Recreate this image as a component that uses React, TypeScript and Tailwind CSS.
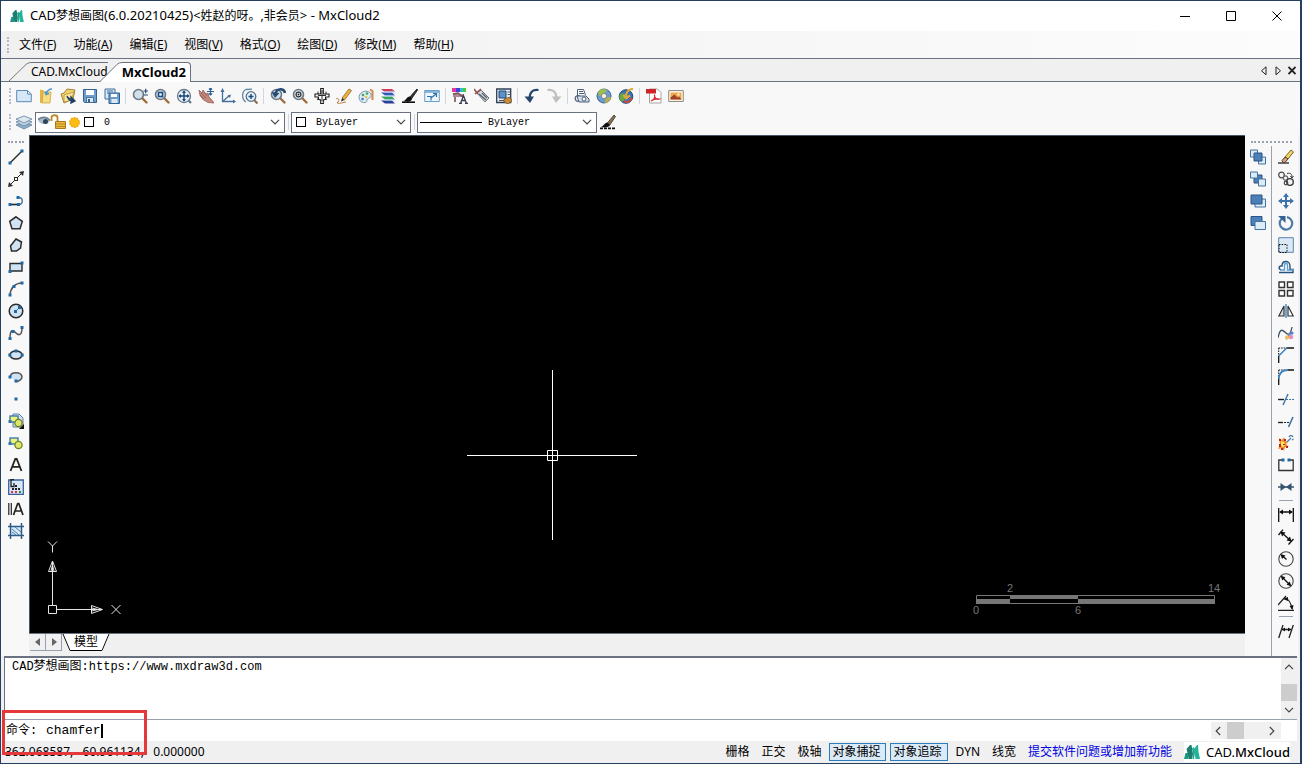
import { useState, type ReactNode } from "react";

const line = "#2b2b2b";
const blue = "#2f74ad";
const pale = "#cfe3f5";

const Lens = ({ children }: { children?: ReactNode }) => (
    <>
        <path d="M10 10l4.5 4.5" stroke="#a06c3a" strokeWidth="2.4" strokeLinecap="round" />
        <circle cx="6.5" cy="6.5" r="5" fill="#d3e0ea" stroke="#6b7885" strokeWidth="1.6" />
        {children}
    </>
);

const Shapes = () => (
    <>
        <rect x="2" y="3" width="8" height="6" fill="#eef27a" stroke={blue} strokeWidth="1.3" />
        <circle cx="10.5" cy="10" r="3.6" fill="#dfe66a" stroke="#6f8428" strokeWidth="1.3" />
        <rect x="0.5" y="7" width="3" height="3" fill={blue} />
    </>
);

const dot = (x: number, y: number) => (
    <rect key={`${x}-${y}`} x={x - 1.5} y={y - 1.5} width="3" height="3" fill="#1f6aa5" />
);

const icons: Record<string, ReactNode> = {
    // standard
    New: <path d="M.7 2.5h10.8l3.8 3.6v7.6H.7z M11.5 2.5v3.6h3.8" fill="#d5e8f8" stroke="#5d8bb5" />,
    Open: (
        <>
            <path d="M2 1.5l4 1v12l-4 .5z" fill="#e3b541" />
            <path d="M5 4h8l-1 11H4z" fill="#f6dc83" stroke="#cfa23a" strokeWidth=".8" />
            <path d="M14 1c-3 0-5 2-6 5M7 3.5l1 3 3-1" stroke="#4d94cc" strokeWidth="1.5" />
        </>
    ),
    OpenCloud: (
        <>
            <path d="M1 6l3-1 3-4 8 1-2 9-9 4z" fill="#efd173" stroke="#a58432" />
            <path d="M4 7l10-3-3 8-7 2z" fill="#fae89a" stroke="#b6913a" strokeWidth=".8" />
            <path d="M7 8c1 3 3 5 6 4.500M11 9l4 4-4 2z" stroke="#1d3f63" strokeWidth="1.4" fill="#1d3f63" />
        </>
    ),
    Save: (
        <>
            <path d="M1.5 1.5h13v13h-12l-1-1z" fill="#6d9fce" stroke="#33618f" />
            <path d="M4 2h8v5H4z" fill="#fff" />
            <path d="M4.5 9.5h7v5h-7z" fill="#dce9f5" stroke="#33618f" strokeWidth=".8" />
            <path d="M6 11h2v3H6z" fill="#33618f" />
        </>
    ),
    SaveAll: (
        <>
            <path d="M1 1h10v10H1z" fill="#d9e8f6" stroke="#41719f" />
            <path d="M3 3h6M3 5h3" stroke="#41719f" />
            <path d="M5 5h10.5v10.5H5z" fill="#6d9fce" stroke="#33618f" />
            <path d="M7 6h6v3H7z" fill="#fff" />
            <path d="M7.5 11h6v4h-6z" fill="#dce9f5" />
        </>
    ),
    Zoom: (
        <Lens>
            <path d="M11.5 3H16M13.7.8v4.500M11.500 7H16" stroke="#264a74" strokeWidth="1.2" />
        </Lens>
    ),
    ZoomWindow: (
        <Lens>
            <rect x="4.5" y="4.5" width="4" height="4" fill="#eef6fc" stroke="#1f4f86" strokeWidth="1.6" />
        </Lens>
    ),
    ZoomExtents: (
        <>
            <path d="M11 11l4 4" stroke="#5a6e80" strokeWidth="2" />
            <circle cx="8" cy="8" r="6.500" fill="#e4eef6" stroke="#66788a" strokeWidth="1.300" />
            <path d="M8 3v10M3 8h10" stroke="#1d4474" strokeWidth="1.400" />
            <path d="M6 5l2-2.500L10 5zM6 11l2 2.500 2-2.500zM5 6L2.500 8 5 10zM11 6l2.500 2-2.500 2z" fill="#1d4474" />
        </>
    ),
    Pan: (
        <>
            <path d="M1 2l3 3 1-3 3 4 2-1 1 4 2 2 3 4-6-.5-5-3-3-4z" fill="#c4887e" stroke="#96615b" strokeWidth=".8" />
            <path d="M3 5l5 5M6 4l3 4M2 7l4 4" stroke="#8c5550" strokeWidth=".8" />
            <path d="M12.5 0v7M9 3.5h7M11 1.5L12.5 0 14 1.5M11 5.500L12.5 7 14 5.500" stroke="#2a5f98" strokeWidth="1.2" />
        </>
    ),
    Ucs: (
        <>
            <path d="M2.5 2v11.5H14M2.5 13.5l7-6" stroke="#45709c" strokeWidth="1.3" />
            <path d="M.5 4l2-4 2 4zM13 11.500l3 2-3 2zM7.500 7.500l3.500-1-1 3.500z" fill="#45709c" />
        </>
    ),
    ZoomRotate: (
        <>
            <path d="M12 12l3.5 3.5" stroke="#8a6d4b" strokeWidth="2" />
            <circle cx="9" cy="8.5" r="4.800" fill="#e6f1fa" stroke="#5b6f83" strokeWidth="1.3" />
            <path d="M9 6v5M6.500 8.500h5" stroke="#1d4f86" strokeWidth="1.5" />
            <path d="M4 14C-.5 11-.5 3.500 4 1.500l6-.3" stroke="#5f86ab" strokeWidth="1.3" />
        </>
    ),
    ZoomPrevious: (
        <Lens>
            <path d="M15 5C14 0 7 0 5.500 5.500" stroke="#274c78" strokeWidth="2.600" />
            <path d="M1.500 4l3.500 6 4.500-5z" fill="#274c78" />
        </Lens>
    ),
    ZoomRealtime: (
        <Lens>
            <circle cx="6.5" cy="6.5" r="2.4" fill="#fff" stroke="#333" strokeWidth="1.2" />
            <circle cx="6.5" cy="6.5" r="1" fill="#222" />
        </Lens>
    ),
    Regen: (
        <>
            <path d="M6.700 .5h2.600v5.500H15v3H11.500v2H13l-3.700 1v3.500H6.700V12L3 11h1.500V9H1V6h5.700z" fill="#fff" stroke="#1b1b1b" strokeWidth="1.100" />
            <path d="M4 3.500v3M12 3.500v3M8 2v11M4 7.500h8" stroke="#1b1b1b" strokeWidth=".9" />
        </>
    ),
    Pencil: (
        <>
            <path d="M6 10l7-9 2.500 1.500L8.500 12z" fill="#f1b23c" stroke="#8c6324" strokeWidth=".8" />
            <path d="M6 10l2.500 2L5 13.500z" fill="#333" />
            <path d="M0 11c3-2 4 2 1 4 4 1 6-1 9-1" stroke="#bd7b43" />
        </>
    ),
    Palette: (
        <>
            <path d="M13 6C11 2 4 2 1.500 7 0 12 3 15 7 14.500c3-.5 1-3 3-4s4-1 3-4.500z" fill="#dcebf6" stroke="#7896b0" />
            <circle cx="5" cy="7" r="1.300" fill="#49a555" />
            <circle cx="9" cy="5.500" r="1.300" fill="#49a555" />
            <circle cx="4.500" cy="11" r="1.300" fill="#3c7fd0" />
            <circle cx="8" cy="9" r="1.300" fill="#eec041" />
            <path d="M12 1.500l2.500 1.500v9" stroke="#d28a4d" strokeWidth="2" />
        </>
    ),
    Layers: (
        <>
            <path d="M1 1h11l3 2.500H4z" fill="#d63a5d" />
            <path d="M1 4.500h11l3 3H5z" fill="#3456b8" />
            <path d="M1 8.500h11l3 3H5z" fill="#3aa75e" />
            <path d="M1 12.500h11l3 3H5z" fill="#2a3f9b" />
            <path d="M4 4h11M5 8h10M5 12h10" stroke="#a9cbe9" />
        </>
    ),
    Brush: (
        <>
            <path d="M7 10l8-9 .5 1L9 11.500z" fill="#333" stroke="#222" />
            <path d="M8 8.500c-4 0-3 4-7 4.500 4 1.500 8 1 9-2z" fill="#111" />
            <path d="M0 14.200h13" stroke="#111" strokeWidth="1.600" />
        </>
    ),
    FitWindow: (
        <>
            <path d="M.7 2.500h14.600v11H.7z" fill="#eef6fc" stroke="#6aa0cc" />
            <path d="M1 4h14" stroke="#6aa0cc" strokeWidth="1.500" />
            <path d="M7 10l5-4M9 5.500h3.500V9M3 8.500h4v4" stroke="#2f74ad" strokeWidth="1.200" />
        </>
    ),
    ColorText: (
        <>
            <path d="M0 0h4v4H0z" fill="#e9359f" />
            <path d="M4 0h4v4H4z" fill="#3a45da" />
            <path d="M8 0h3v4H8z" fill="#2dc2d1" />
            <path d="M11 0h3v4h-3z" fill="#54c63a" />
            <path d="M1 6h11v3H1z" fill="#a98a90" />
            <path d="M3 9v5M1 6l5-1 5 4" stroke="#7c4e56" strokeWidth="1.600" />
            <path d="M8.500 15.500l3-8 3 8M9.500 12.500h4M7 15.500h3M13 15.500h3" stroke="#3a3a55" strokeWidth="1.300" />
        </>
    ),
    Erase: (
        <>
            <path d="M3 5l4-3 8 8-4 4z" fill="#d7dbdf" stroke="#6d747b" />
            <path d="M5 6l7 6M8 5l5 5" stroke="#565d64" strokeWidth="1.300" />
            <path d="M0 1l4 5M1 6l6-5" stroke="#8f4a4e" strokeWidth="1.500" />
        </>
    ),
    Properties: (
        <>
            <path d="M.7 1h14v13.500H.7z" fill="#eaf1f8" stroke="#2b3f58" strokeWidth="1.300" />
            <path d="M3 3h7v7H3z" fill="#5d92c7" stroke="#244870" />
            <path d="M11.500 4H14M11.500 6.500H14M3 12.500h5" stroke="#555" />
            <path d="M8 11l6-2 2 4-4 3-4-2z" fill="#c98c3f" stroke="#6b481e" strokeWidth=".7" />
        </>
    ),
    Undo: (
        <>
            <path d="M14.500 2C9 1 5.500 4 5.500 11" stroke="#27446b" strokeWidth="2.200" />
            <path d="M.5 8.500h9.500L6 15z" fill="#27446b" />
        </>
    ),
    Redo: (
        <>
            <path d="M1.500 2C7 1 10.500 4 10.500 11" stroke="#bdbfc1" strokeWidth="2.200" />
            <path d="M6 8.500h9.500L10 15z" fill="#bdbfc1" />
        </>
    ),
    Print: (
        <>
            <path d="M3.500 7V1.500h6L11.500 7" fill="#fff" stroke="#4c5e7a" />
            <path d="M5 3.500h4M5 5.500h5" stroke="#4c5e7a" />
            <circle cx="4" cy="10.500" r="2.800" fill="#e8eef6" stroke="#4c5e7a" strokeWidth="1.200" />
            <path d="M3 8h9l3 3v3H5z" fill="#d6deea" stroke="#4c5e7a" />
            <circle cx="10" cy="11" r="2" fill="#fff" stroke="#4c5e7a" />
        </>
    ),
    Publish: (
        <>
            <circle cx="8" cy="8" r="7" fill="#6a9bd1" stroke="#44628a" />
            <path d="M2 4c3-4 7-3 9-2L8 6 3 8z" fill="#9dbf4f" />
            <path d="M9 14c0-4 3-5 6-5-1 4-3 6-6 6z" fill="#b8b14a" />
            <circle cx="8" cy="8" r="2.600" fill="#f4f4ea" stroke="#876" strokeWidth=".8" />
        </>
    ),
    Globe: (
        <>
            <circle cx="8" cy="8.500" r="6.800" fill="#3c70b3" stroke="#26456f" />
            <path d="M2 6c3-2 5 0 5 3s-2 4-3 5c-3-2-3-5-2-8z" fill="#69a844" />
            <path d="M15 1C10 1 8 5 8 9M5.500 7L8 10.500 12 7.500" stroke="#dba93c" strokeWidth="2.200" />
            <path d="M6 13c3 2 6 1 8-3" stroke="#d8483b" strokeWidth="1.800" />
        </>
    ),
    Pdf: (
        <>
            <path d="M3.500 1h8l3.500 3.500V15H3.500z" fill="#fff" stroke="#a5a5a5" />
            <path d="M0 1h10v4.500H0z" fill="#cf2229" />
            <path d="M5 13c3-1 4-4 3.500-6.500C8 10 11 12 13.500 11 10 10.500 7 11.500 5 13z" stroke="#d8262c" strokeWidth="1.200" />
        </>
    ),
    Image: (
        <>
            <path d="M.7 2.500h14.600v11H.7z" fill="#fdf3df" stroke="#8d8d8d" />
            <path d="M2.500 4.500h11v7h-11z" fill="#efa94f" />
            <path d="M2.500 11.500v-2l4-3 3 3 1.500-1 2.500 3z" fill="#a2412c" />
            <circle cx="10.500" cy="6.500" r="1.200" fill="#fff2a8" />
        </>
    ),
    // draw
    Line: <><path d="M2.5 13.5l11-11" stroke={line} strokeWidth="1.4" />{dot(2, 14)}{dot(14, 2)}</>,
    Ray: (
        <>
            <path d="M2 14L14 2" stroke={line} />
            <path d="M0 16l1-5 4 4zM16 0l-5 1 4 4z" fill={line} />
            <rect x="6.5" y="6.5" width="3" height="3" fill="#fff" stroke={line} />
        </>
    ),
    Polyline: <><path d="M2 11.500h8.500c5 0 5-7 0-7" stroke="#4d7ba6" strokeWidth="1.5" /><path d="M2 11.500h8" stroke={line} strokeWidth="1.4" />{dot(2, 11.5)}{dot(10.5, 11.5)}{dot(10, 4.5)}</>,
    Polygon: <path d="M8 1.800l6.300 4.600-2.300 7.300H4L1.700 6.400z" fill={pale} stroke={line} strokeWidth="1.5" />,
    PolygonFree: <path d="M8 2l5.500 3-1 6-4 3H3.500l-1-5z" fill={pale} stroke={line} strokeWidth="1.5" />,
    Rectangle: <><path d="M2 4.500h12v7.500H2z" fill={pale} stroke={line} strokeWidth="1.4" />{dot(2, 12.5)}{dot(14, 4)}</>,
    Arc: <><path d="M2 14C2.500 7 7 2 14 2" stroke="#555" strokeWidth="1.5" />{dot(2, 14)}{dot(6, 5.5)}{dot(14, 2)}</>,
    Circle: <><circle cx="8" cy="8" r="6.800" fill={pale} stroke={line} strokeWidth="1.5" /><path d="M8 8l3.500-3.500" stroke={blue} />{dot(7.5, 8.5)}{dot(11.5, 4.5)}</>,
    Spline: <><path d="M2 13c0-9 3-8 6-5s6 2 6-5" stroke="#555" strokeWidth="1.5" />{dot(2, 13.5)}{dot(5, 6.5)}{dot(14, 2.5)}</>,
    Ellipse: <><ellipse cx="8" cy="8" rx="6" ry="4" fill={pale} stroke={line} strokeWidth="1.5" />{dot(1.8, 8)}{dot(14.2, 8)}{dot(8, 4)}</>,
    EllipseArc: <><path d="M2.500 7C3 2.500 13 2.500 14 7.500c0 3-3 5-6.500 5" fill={pale} stroke="#555" strokeWidth="1.5" />{dot(2, 8)}{dot(8, 12)}</>,
    Point: dot(8, 8),
    MakeBlock: <><path d="M5 1h6l4 4v9H5z" fill="#cfdff0" stroke="#6180a3" /><Shapes /><path d="M16 11v5h-5z" fill="#111" /></>,
    InsertBlock: <Shapes />,
    Text: <path d="M2.500 14L7.300 2h1.400l4.800 12M4.500 9.800h7" stroke="#222" strokeWidth="1.8" />,
    Hatch: (
        <>
            <path d="M.7 1h14.600v14.300H.7z" fill="#d7e7f7" stroke="#3a5f9c" strokeWidth="1.300" />
            <path d="M6 .5H3v7h3V4" stroke="#222" strokeWidth="1.300" />
            <path d="M7 6h2v2H7zM10 9h2v2h-2zM7 9h2v2H7zM4 9h2v2H4z" fill="#222" />
            <path d="M3 12h2v2H3zM7 12h2v2H7z" fill="#d6324a" />
            <path d="M11 12h2v2h-2z" fill="#2b8447" />
        </>
    ),
    Mtext: <><path d="M.8 2v12M3.300 2v12" stroke="#222" strokeWidth="1.2" /><path d="M5.500 14L9.700 2.500h1.100L15 14M7.200 10h6" stroke="#222" strokeWidth="1.7" /></>,
    Region: (
        <>
            <path d="M2.500 3.500h11v9h-11z" fill="#d7e9f6" />
            <path d="M0 3.500h16M0 12.500h16M2.500 0v16M13.500 0v16" stroke="#2c5c86" strokeWidth="1.5" />
            <path d="M4 6l7 6M7 4l6 5M4 9l4 3" stroke="#4a7ea8" />
        </>
    ),
    // draw order
    ToFront: <><path d="M.5 1h7v7h-7zM8.500 8h7v7h-7z" fill="#dcebf8" stroke="#44739f" /><path d="M4 4h8v8H4z" fill="#4b80b8" stroke="#2c5585" /></>,
    ToBack: <><path d="M4 4h8v8H4z" fill="#4b80b8" stroke="#2c5585" /><path d="M.5 1h7v6h-7zM8.500 8h7v7h-7z" fill="#dcebf8" stroke="#44739f" /></>,
    AboveObject: <><path d="M5 6h10.500v8H5z" fill="#dcebf8" stroke="#44739f" /><path d="M1 2h11v9H1z" fill="#4b80b8" stroke="#2c5585" /></>,
    UnderObject: <><path d="M1 1.500h11v9H1z" fill="#4b80b8" stroke="#2c5585" /><path d="M5 6.500h10.500v8H5z" fill="#dcebf8" stroke="#44739f" /></>,
    // modify
    Delete: (
        <>
            <path d="M0 14h11" stroke="#222" strokeWidth="1.3" />
            <path d="M7 8l6-7 2.500 2L10 10z" fill="#f1d75b" stroke="#765f2d" />
            <path d="M4 11.500L7 8l3 2-3 3.500H5z" fill="#d9a07b" stroke="#4d3f33" />
        </>
    ),
    Copy: (
        <>
            <circle cx="3.5" cy="4" r="2.800" fill="#f6f6f6" stroke="#444" strokeWidth="1.2" />
            <circle cx="7.5" cy="7" r="2.200" stroke="#666" strokeWidth="1.2" />
            <circle cx="12" cy="11" r="3.300" fill="#eef4fa" stroke="#333" strokeWidth="1.3" />
            <circle cx="8" cy="12" r="1.800" stroke="#444" strokeWidth="1.2" />
            <path d="M9 2.500c4-1 5 1 5 4M12.500 5L14 7l1.500-2" stroke="#333" />
        </>
    ),
    Move: <><path d="M8 2v12M2 8h12" stroke="#3d73a9" strokeWidth="2" /><path d="M5 4l3-4 3 4zM5 12l3 4 3-4zM4 5L0 8l4 3zM12 5l4 3-4 3z" fill="#3d73a9" /></>,
    Rotate: <><path d="M9 2.200A6.200 6.200 0 1 1 3.500 4" stroke="#4b7aa8" strokeWidth="2.2" /><path d="M0 1h7.500v7z" fill="#35638f" /></>,
    Scale: <><path d="M.7.7h14.600v14.600H.7z" fill="#dbe9f6" stroke="#5b82ab" /><path d="M1 7.500h8v8M1 8v7.500h8" stroke="#111" strokeDasharray="1.5 1.2" /></>,
    Offset: (
        <>
            <path d="M1 13.500h14v-3h-3V7c0-6-8-6-8 0H3c-2.500 0-2.500 3.500 0 3.500" stroke="#24537f" strokeWidth="1.4" />
            <path d="M2 11h4.500V6.500c0-3 3-3 3 0V11H15" stroke="#5c9bd0" strokeWidth="1.3" />
        </>
    ),
    Array: <path d="M1 1h5.500v5.500H1zM9.500 1H15v5.500H9.500zM1 9.500h5.500V15H1zM9.500 9.500H15V15H9.500z" fill="#fff" stroke="#333" strokeWidth="1.4" />,
    Mirror: <><path d="M6 3v10H.8z" fill="#ddd" stroke="#333" strokeWidth="1.2" /><path d="M10 3v10h5.200z" fill="#fff" stroke="#333" strokeWidth="1.2" /><path d="M8 1v14" stroke="#3d86c4" strokeWidth="1.4" /></>,
    EditSpline: (
        <>
            <path d="M0 13c2-11 5-8 8-5s5 0 6-6" stroke="#3f5266" strokeWidth="1.3" />
            <path d="M8 14l6-7" stroke="#6b90c8" strokeWidth="2" />
            <circle cx="13" cy="12" r="2.300" fill="#e78fb5" />
            <circle cx="9" cy="12.500" r="2" fill="#f3bf54" />
            <circle cx="14" cy="8" r="1.600" fill="#5580d0" />
        </>
    ),
    Chamfer: <><path d="M.7 1h8M.7 1v8" stroke="#111" strokeDasharray="1.5 1" /><path d="M8.500 1H16M.7 9v7" stroke="#111" strokeWidth="1.3" /><path d="M.7 9l8-8" stroke="#3d86c4" strokeWidth="1.6" /></>,
    Fillet: <><path d="M.7 1h8M.7 1v8" stroke="#111" strokeDasharray="1.5 1" /><path d="M.7 9v7M9 1h7" stroke="#111" strokeWidth="1.3" /><path d="M.7 10C1 4 4 1 10 1" stroke="#3d86c4" strokeWidth="1.9" /></>,
    Trim: <><path d="M0 8.500h6" stroke="#222" strokeWidth="1.4" /><path d="M8 8.500h8" stroke="#3d73a9" strokeDasharray="2 1" /><path d="M5 14l5-11" stroke="#3d73a9" strokeWidth="1.4" /></>,
    Extend: <><path d="M0 9.500h5" stroke="#222" strokeWidth="1.4" /><path d="M6 9.500h6" stroke="#222" strokeDasharray="2 1" /><path d="M10.500 14l4.500-10" stroke="#3d73a9" strokeWidth="1.6" /></>,
    Explode: (
        <>
            <path d="M1 3l3 2 2-3 1 4 3 1-2 2 3 3h-4l-1 4-2-3-4 1 2-4z" fill="#f28a28" />
            <path d="M3 6l3 1 1 3-2 2-2-1z" fill="#ffe45c" />
            <path d="M1 9h2v3H1zM6 4h2v2H6zM8 11h2v2H8zM3 13h2v2H3zM1 4h2v2H1zM5 9h2v1H5z" fill="#b02a24" />
            <path d="M9 7l4-4M11 2c1-2 3-2 4 0M14 5l1.500-1" stroke="#557fa8" strokeWidth="1.4" />
        </>
    ),
    Break: <><path d="M4 3H.8v10.500h14.400V3H12" stroke="#333" strokeWidth="1.3" />{dot(5, 3)}{dot(11, 3)}</>,
    Join: <><path d="M0 8h16" stroke="#34536f" strokeWidth="1.5" /><path d="M2.500 4L8 8l-5.500 4zM13.500 4L8 8l5.500 4z" fill="#34536f" /></>,
    // dimension
    DimLinear: <><path d="M.7 1v14M15.300 1v14M2 5h12" stroke="#111" strokeWidth="1.3" /><path d="M1 5l4-2.500v5zM15 5l-4-2.500v5z" fill="#111" /></>,
    DimAligned: <><path d="M3 3l10 9M.5 6L5 .7M10.500 15.500l5-5.500" stroke="#111" strokeWidth="1.3" /><path d="M2.500 2.500l5 1-3.500 4zM13.500 12.500l-5-1 3.500-4z" fill="#111" /></>,
    DimRadius: <><circle cx="8" cy="8" r="7.200" stroke="#444" strokeWidth="1.1" /><path d="M4 4.500l4.500 4" stroke="#111" strokeWidth="1.3" /><path d="M2.500 3l5 1.500L4 8z" fill="#111" /></>,
    DimDiameter: <><circle cx="8" cy="8" r="7.200" stroke="#444" strokeWidth="1.1" /><path d="M4 4l8 8" stroke="#111" strokeWidth="1.3" /><path d="M2.700 2.700l4.800 1.500-3.300 3.300zM13.300 13.300l-4.800-1.500 3.300-3.300z" fill="#111" /></>,
    DimAngular: <><path d="M0 15.300h16M0 10l8-9M7 3c4 1 6 5 7 11" stroke="#222" strokeWidth="1.2" /><path d="M5 4l5-2v4zM14.500 15l-3-4 4-1z" fill="#111" /></>,
    DimEdit: <><path d="M.7 15L5 2M11 15l4.300-13M4 6.500h9" stroke="#222" strokeWidth="1.3" /><path d="M4 6.500l3-2v4zM13 6.500l-3-2v4z" fill="#111" /></>,
    LayerManager: (
        <>
            <path d="M0 11l8-3 8 3-8 4z" fill="#8fb0cc" stroke="#5f7f9c" strokeWidth=".8" />
            <path d="M0 8l8-3 8 3-8 4z" fill="#c3d6e6" stroke="#5f7f9c" strokeWidth=".8" />
            <path d="M0 5l8-3 8 3-8 4z" fill="#dce8f2" stroke="#5f7f9c" strokeWidth=".8" />
        </>
    ),
    MatchLine: (
        <>
            <path d="M7 9.500L14 1l1.500 1.500L9.500 11.500z" fill="#8b6f4b" stroke="#333" strokeWidth=".8" />
            <path d="M7.500 8.500L10 11c-2 3-6 2.500-9 2 3-1 3-4 6.500-4.500z" fill="#111" />
            <path d="M0 14.300h16" stroke="#111" strokeWidth="1.800" strokeDasharray="3 1" />
        </>
    ),
};

const standardBar = [
    ["New", "Open", "OpenCloud", "Save", "SaveAll"],
    ["Zoom", "ZoomWindow", "ZoomExtents", "Pan", "Ucs", "ZoomRotate"],
    ["ZoomPrevious", "ZoomRealtime", "Regen", "Pencil", "Palette", "Layers", "Brush", "FitWindow"],
    ["ColorText", "Erase", "Properties"],
    ["Undo", "Redo"],
    ["Print", "Publish", "Globe"],
    ["Pdf", "Image"],
];

const drawBar = [
    "Line", "Ray", "Polyline", "Polygon", "PolygonFree", "Rectangle", "Arc", "Circle", "Spline",
    "Ellipse", "EllipseArc", "Point", "MakeBlock", "InsertBlock", "Text", "Hatch", "Mtext", "Region",
];

const orderBar = ["ToFront", "ToBack", "AboveObject", "UnderObject"];

const modifyBar = [
    [
        "Delete", "Copy", "Move", "Rotate", "Scale", "Offset", "Array", "Mirror",
        "EditSpline", "Chamfer", "Fillet", "Trim", "Extend", "Explode", "Break", "Join",
    ],
    ["DimLinear", "DimAligned", "DimRadius", "DimDiameter", "DimAngular"],
    ["DimEdit"],
];

const menus = [
    ["文件", "F"],
    ["功能", "A"],
    ["编辑", "E"],
    ["视图", "V"],
    ["格式", "O"],
    ["绘图", "D"],
    ["修改", "M"],
    ["帮助", "H"],
];

const modes = ["栅格", "正交", "极轴", "对象捕捉", "对象追踪", "DYN", "线宽"];

function Tool({ name }: { name: string }) {
    return (
        <button aria-label={name} className="flex size-[22px] shrink-0 items-center justify-center hover:bg-sky-100">
            <svg viewBox="0 0 16 16" className="size-4" fill="none">
                {icons[name]}
            </svg>
        </button>
    );
}

function Logo({ className }: { className: string }) {
    return (
        <svg viewBox="0 0 16 14" className={className}>
            <path d="M0 14l1.500-6H5l-.5 6z" fill="#1f9683" />
            <path d="M2.500 4L6 0h1.500l1.500 9-1 5H5z" fill="#1b7f6f" />
            <path d="M8 3.500L9 7l-.5 7H10l1-7-1-5z" fill="#22a68f" />
            <path d="M10 4l3-4h1l.5 7 1.500 7h-4.500z" fill="#22b39a" />
        </svg>
    );
}

function Chevron({ className = "" }: { className?: string }) {
    return (
        <svg viewBox="0 0 10 6" className={`h-[6px] w-[10px] shrink-0 ${className}`} fill="none">
            <path d="M1 .8l4 4 4-4" stroke="#444" strokeWidth="1.2" />
        </svg>
    );
}

const Grip = () => <div className="h-4 w-0 border-l-2 border-dotted border-gray-400/70" />;

function TitleBar() {
    return (
        <header className="flex h-[30px] items-center bg-white pl-[9px]">
            <Logo className="h-3 w-[14px]" />
            <h1 className="ml-1.5 flex-1 text-[13px]">
                CAD<span className="text-[12px]">梦想画图</span>(6.0.20210425)&lt;
                <span className="text-[12px]">姓赵的呀。,非会员</span>&gt; - MxCloud2
            </h1>
            {[
                ["Minimize", "M0 5.5h10"],
                ["Maximize", "M.5.5h9v9h-9z"],
                ["Close", "M.5.5l9 9M9.5.5l-9 9"],
            ].map(([label, d]) => (
                <button key={label} aria-label={label} className="flex h-full w-[46px] items-center justify-center">
                    <svg viewBox="0 0 10 10" className="size-[10px]" fill="none" stroke="#000">
                        <path d={d} />
                    </svg>
                </button>
            ))}
        </header>
    );
}

function TabStrip() {
    return (
        <div className="flex h-[23px] items-end border-b border-gray-500 bg-[#f0f0f0] pl-2">
            <button className="flex h-[19px] items-center text-[12px]">
                <svg viewBox="0 0 22 19" className="h-[19px] w-[22px]" fill="none">
                    <path d="M0 19L17 2.5Q19 .5 22 .5" stroke="#7a7a7a" />
                </svg>
                <span className="flex h-full items-center border-t border-gray-500">CAD.MxCloud</span>
            </button>
            <button className="z-10 -mb-px -ml-2 flex h-5 items-center text-[13px] font-bold">
                <svg viewBox="0 0 22 20" className="h-5 w-[22px]">
                    <path d="M0 20L17 2.500Q19 .5 22 .5V20z" fill="#fff" />
                    <path d="M0 19.500L17 2.500Q19 .5 22 .5" fill="none" stroke="#6b7280" />
                </svg>
                <span className="flex h-full items-center rounded-tr-sm border-t border-r border-gray-500 bg-white pr-1">
                    MxCloud2
                </span>
            </button>
            <div className="ml-auto flex h-full items-center gap-1.5 pr-1">
                {[
                    ["Previous tab", "M6 .8v8L1.500 4.800z"],
                    ["Next tab", "M2 .8v8l4.500-4z"],
                    ["Close tab", "M.5 1l7 7M7.500 1l-7 7"],
                ].map(([label, d], i) => (
                    <button key={label} aria-label={label}>
                        <svg viewBox="0 0 8 9" className="h-[9px] w-2" fill="none" stroke="#222" strokeWidth={i === 2 ? 1.8 : 1}>
                            <path d={d} />
                        </svg>
                    </button>
                ))}
            </div>
        </div>
    );
}

const Swatch = () => <span className="size-[10px] shrink-0 border border-black bg-white" />;

function PropertyBar() {
    const select = "min-w-0 flex-1 appearance-none bg-transparent font-['Liberation_Mono',monospace] text-[10px] outline-none";
    const box = "flex h-[21px] items-center border border-gray-500 bg-white";

    return (
        <div className="flex h-[26px] items-center pl-2">
            <Grip />
            <div className="ml-0.5">
                <Tool name="LayerManager" />
            </div>
            <div className={`${box} w-[250px] pr-1 pl-0.5`}>
                <svg viewBox="0 0 44 16" className="h-4 w-11 shrink-0" fill="none">
                    <path d="M0 5c4-3 9-3 12 1-1 5-8 5-11 2z" fill="#a9bccb" />
                    <path d="M0 5.500c4-3 9-3 12 1" stroke="#6d8294" strokeWidth="1.6" />
                    <circle cx="7.500" cy="7.500" r="2.500" fill="#2d4358" />
                    <path d="M13.500 7V3.500c0-3 6-3 6 0V8" stroke="#b98a23" strokeWidth="1.800" />
                    <path d="M17.500 7.500h10v7h-10z" fill="#e9b83c" stroke="#a87b1c" />
                    <path d="M18 10h9M18 12.500h9" stroke="#b98a23" />
                    <circle cx="36.500" cy="8.500" r="4.800" fill="#fbbd13" stroke="#eba312" strokeWidth="1.2" strokeDasharray="2 1" />
                </svg>
                <span className="ml-0.5 flex">
                    <Swatch />
                </span>
                <select aria-label="Layer" className={`${select} ml-2.5`}>
                    <option>0</option>
                </select>
                <Chevron />
            </div>
            <div className="mr-0.5 ml-[3px] h-4 w-px bg-gray-300" />
            <div className={`${box} w-[120px] pr-1 pl-1`}>
                <Swatch />
                <select aria-label="Color" className={`${select} ml-2.5`}>
                    <option>ByLayer</option>
                </select>
                <Chevron />
            </div>
            <div className="mr-0.5 ml-[3px] h-4 w-px bg-gray-300" />
            <div className={`${box} w-[180px] pr-1 pl-0.5`}>
                <span className="h-px w-[62px] bg-black" />
                <select aria-label="Line type" className={`${select} ml-1.5`}>
                    <option>ByLayer</option>
                </select>
                <Chevron />
            </div>
            <Tool name="MatchLine" />
        </div>
    );
}

function Canvas() {
    return (
        <div className="relative flex-1 overflow-hidden border-t border-l border-gray-600 bg-black">
            {/* crosshair */}
            <svg viewBox="0 0 171 171" className="absolute top-[234px] left-[437px] size-[171px]" fill="none" stroke="#fff">
                <path d="M85.500 0v170M0 85.500h170" />
                <path d="M80.500 80.500h10v10h-10z" />
            </svg>

            {/* ucs axes */}
            <svg viewBox="0 0 76 76" className="absolute bottom-4 left-[17px] size-[76px]" fill="none" stroke="#e5e5e5">
                <path d="M1.500 64.500h8v8h-8zM5.500 64V20M10 68.500h45" />
                <path d="M1.500 30.500L5.500 20l4 10.500zM4 30l1.500-6L7 30M44.500 64.500v8l11-4zM45 67l6 1.500-6 1.500" />
                <path d="M1 .5L5.500 5 10 .5M5.500 5v6.500M64.500 64l9 9M73.500 64l-9 9" />
            </svg>

            {/* scale */}
            <svg viewBox="0 0 250 36" className="absolute right-6 bottom-[15px] h-9 w-[250px]" fontFamily="Liberation Sans, sans-serif" fontSize="11" fill="#777" textAnchor="middle">
                <path d="M5.500 13.500h238v8h-238z" fill="none" stroke="#777" />
                <path d="M5 17h34v5H5zM39 13h68v4H39zM107 17h137v5H107z" />
                <text x="39" y="10">2</text>
                <text x="243" y="10">14</text>
                <text x="5" y="32">0</text>
                <text x="107" y="32">6</text>
            </svg>
        </div>
    );
}

function ModelTabs() {
    return (
        <div className="flex h-[23px] items-start border-t border-gray-500 pl-px">
            {["M6 0v8L1 4z", "M2 0v8l5-4z"].map((d, i) => (
                <button
                    key={d}
                    aria-label={i ? "Next layout" : "Previous layout"}
                    className="flex h-[17px] w-4 items-center justify-center border-r border-b border-gray-400"
                >
                    <svg viewBox="0 0 8 8" className="size-2" fill="#666">
                        <path d={d} />
                    </svg>
                </button>
            ))}
            <button className="flex h-[17px] text-[12px] leading-4">
                <svg viewBox="0 0 9 17" className="h-[17px] w-[9px]">
                    <path d="M1 0l7 16.500h1V0z" fill="#fff" />
                    <path d="M1 0l7 16.500h1" fill="none" stroke="#111" />
                </svg>
                <span className="border-b border-black bg-white px-[3px]">模型</span>
                <svg viewBox="0 0 9 17" className="h-[17px] w-[9px]">
                    <path d="M8 0L1 16.500H0V0z" fill="#fff" />
                    <path d="M8 0L1 16.500H0" fill="none" stroke="#111" />
                </svg>
            </button>
        </div>
    );
}

function RightDock() {
    return (
        <aside className="flex w-[53px] flex-col bg-[#f8f8f8]">
            <div className="mx-1.5 mt-1.5 mb-[3px] border-t-2 border-dotted border-gray-400" />
            <div className="flex flex-1">
                <div className="flex w-[27px] flex-col items-center border-r border-gray-400">
                    {orderBar.map((name) => (
                        <Tool key={name} name={name} />
                    ))}
                </div>
                <div className="flex flex-1 flex-col items-center pl-0.5">
                    {modifyBar.map((group, i) => (
                        <div key={i} className="flex flex-col items-center">
                            {i > 0 && <div className="mt-0.5 mb-[3px] h-px w-3.5 bg-gray-400" />}
                            {group.map((name) => (
                                <Tool key={name} name={name} />
                            ))}
                        </div>
                    ))}
                </div>
            </div>
        </aside>
    );
}

function CommandPanel() {
    const [command, setCommand] = useState("chamfer");

    return (
        <section className="mx-[3px] border-t-2 border-l border-gray-500 bg-white font-['Liberation_Mono','Noto_Sans_CJK_SC',monospace] text-[12px]">
            <div className="flex h-[61px]">
                <p className="flex-1 pt-px pl-[7px] leading-4">CAD梦想画图:https://www.mxdraw3d.com</p>
                <div className="flex w-4 flex-col items-center bg-[#f0f0f0] py-1.5">
                    <Chevron className="rotate-180" />
                    <div className="mt-auto mb-1.5 h-[17px] w-full bg-[#cdcdcd]" />
                    <Chevron />
                </div>
            </div>
            <div className="flex h-[22px] items-center border-t border-gray-400">
                <label htmlFor="command" className="w-[41px] pl-px">
                    命令:
                </label>
                <input
                    id="command"
                    value={command}
                    onChange={(e) => setCommand(e.target.value)}
                    className="field-sizing-content text-[13px] outline-none"
                />
                <span className="h-3.5 w-0.5 bg-black" />
                <div className="mr-4 ml-auto flex h-[17px] w-[70px] items-center justify-between bg-[#f0f0f0] pr-1 pl-0.5">
                    <Chevron className="rotate-90" />
                    <div className="mr-auto ml-1 h-full w-[17px] bg-[#cdcdcd]" />
                    <Chevron className="-rotate-90" />
                </div>
            </div>
        </section>
    );
}

function StatusBar() {
    const [active, setActive] = useState(["对象捕捉", "对象追踪"]);

    const toggle = (mode: string) =>
        setActive(active.includes(mode) ? active.filter((m) => m !== mode) : [...active, mode]);

    return (
        <footer className="flex h-[22px] items-center pr-2.5 pl-1 text-[12px]">
            <p className="whitespace-pre">362.068587,   60.961134,   0.000000</p>
            <div className="ml-auto flex items-center gap-1">
                {modes.map((mode) => (
                    <button
                        key={mode}
                        onClick={() => toggle(mode)}
                        className={
                            active.includes(mode)
                                ? "h-[18px] border border-[#2b7cba] bg-[#dbeaf7] pr-[5px] pl-0.5 leading-4"
                                : "h-[18px] px-1 leading-[18px]"
                        }
                    >
                        {mode}
                    </button>
                ))}
            </div>
            <a href="#feedback" className="ml-2 text-[#0000e0]">
                提交软件问题或增加新功能
            </a>
            <div className="ml-3 flex items-center gap-1.5 bg-white">
                <Logo className="h-3.5 w-4" />
                <span className="text-[13px] leading-5">
                    CAD.<b className="font-medium">MxCloud</b>
                </span>
            </div>
        </footer>
    );
}

export default function App() {
    return (
        <div className="flex h-screen min-h-[764px] flex-col border border-r-2 border-[#24405e] bg-[#f0f0f0] font-['Noto_Sans','Noto_Sans_CJK_SC',sans-serif] text-black">
            <TitleBar />

            <nav className="flex h-7 items-center border-b border-gray-500 bg-gradient-to-r from-[#f0f0f0] to-[#fcfcfc] pl-1.5">
                <Grip />
                <div className="ml-0.5 flex gap-px">
                    {menus.map(([label, key]) => (
                        <button key={key} className="px-2 text-[12px]">
                            {label}(<u>{key}</u>)
                        </button>
                    ))}
                </div>
            </nav>

            <TabStrip />

            <div className="bg-[#f8f8f8]">
                <div className="flex h-[27px] items-center pl-2">
                    <Grip />
                    <div className="ml-0.5 flex">
                        {standardBar.map((group, i) => (
                            <div key={i} className="flex items-center">
                                {i > 0 && <div className="mr-[3px] ml-0.5 h-4 w-px bg-gray-300" />}
                                {group.map((name) => (
                                    <Tool key={name} name={name} />
                                ))}
                            </div>
                        ))}
                    </div>
                </div>
                <PropertyBar />
            </div>

            <main className="flex flex-1">
                <aside className="flex w-7 flex-col items-center bg-[#f8f8f8] pl-0.5">
                    <div className="mt-1.5 mb-[3px] w-4 border-t-2 border-dotted border-gray-400" />
                    {drawBar.map((name) => (
                        <Tool key={name} name={name} />
                    ))}
                </aside>
                <div className="flex flex-1 flex-col">
                    <Canvas />
                    <ModelTabs />
                </div>
                <RightDock />
                <div className="w-0.5" />
            </main>

            <div className="relative">
                <CommandPanel />
                <StatusBar />
                {/* highlight around the command line */}
                <div className="pointer-events-none absolute bottom-2 left-px h-[45px] w-[145px] border-3 border-[#e5383b]" />
            </div>
        </div>
    );
}
